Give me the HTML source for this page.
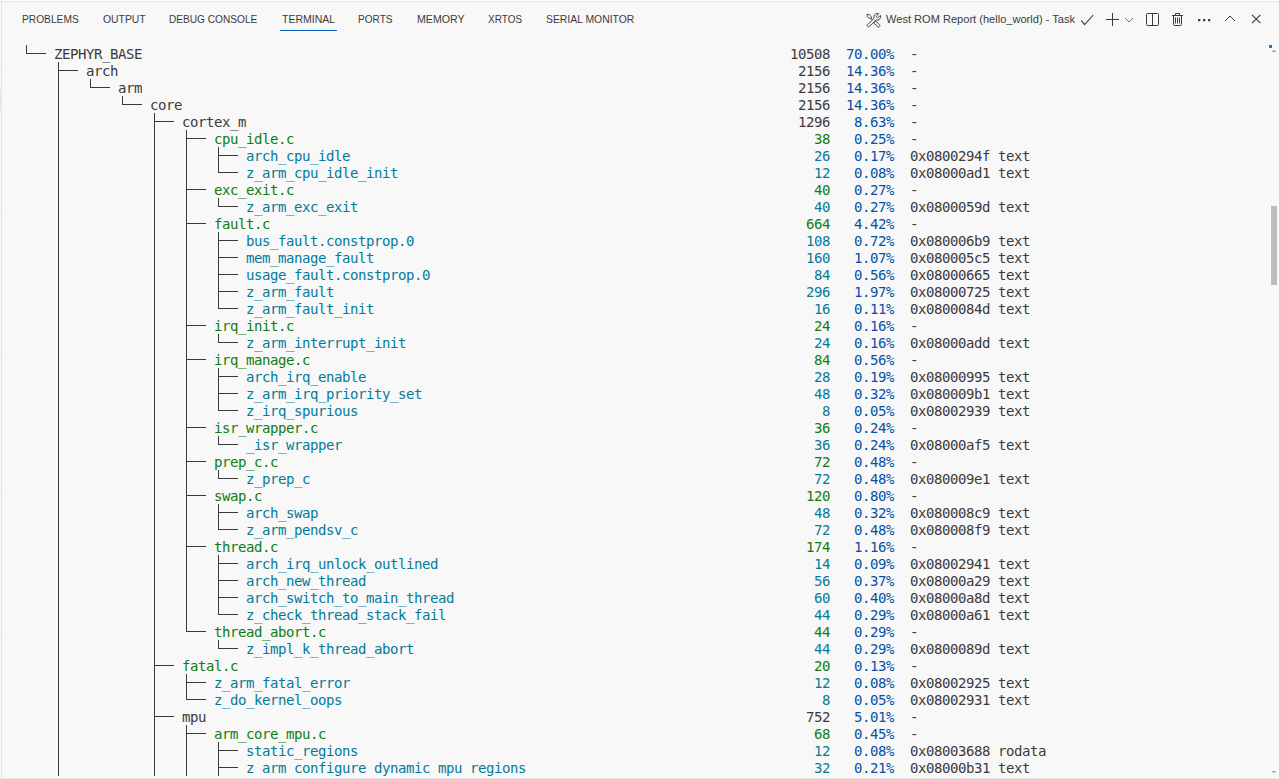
<!DOCTYPE html>
<html lang="en">
<head>
<meta charset="utf-8">
<title>West ROM Report (hello_world) - Task</title>
<style>
html,body{margin:0;padding:0;background:#f8f8f8;}
body{width:1279px;height:779px;overflow:hidden;background:#f8f8f8;position:relative;font-family:"Liberation Sans","DejaVu Sans",sans-serif;color:#3b3b3b;}
.edge-l{position:absolute;left:1px;top:0;width:1px;height:779px;background:#e5e5e5;}
.edge-t0{position:absolute;left:2px;top:0;width:1277px;height:1px;background:#ffffff;}
.edge-t{position:absolute;left:1px;top:1px;width:1278px;height:1px;background:#e5e5e5;}
.edge-b{position:absolute;left:0;top:778px;width:1279px;height:1px;background:#e5e5e5;}
.tab{transform-origin:0 0;position:absolute;top:11px;height:16px;line-height:16px;font-size:11px;white-space:nowrap;color:#3b3b3b;text-transform:uppercase;}
.tab.on{color:#3b3b3b;}
.tabline{position:absolute;left:280px;top:30px;width:57px;height:1px;background:#005fb8;}
.ttl{transform-origin:0 0;transform:scaleX(0.962);position:absolute;left:886px;top:10px;height:18px;line-height:18px;font-size:11.5px;white-space:nowrap;color:#3b3b3b;}
.ico{position:absolute;overflow:visible;}
.term{position:absolute;left:0;top:0;width:1279px;height:776px;overflow:hidden;font-family:"DejaVu Sans Mono","Liberation Mono",monospace;font-size:14px;letter-spacing:-0.4287px;color:#3b3b3b;}
.r{position:absolute;left:0;height:17px;line-height:17px;white-space:pre;}
.r span{position:absolute;top:1px;height:17px;line-height:17px;white-space:pre;}
.g{color:#107c10;}
.c{color:#047b9a;}
.b{color:#0451a5;}
.ln{position:absolute;background:#3b3b3b;}
.mk{position:absolute;left:0;width:1px;height:1px;background:#e5e5e5;}
.sel{position:absolute;left:0;top:89px;width:1px;height:22px;background:#e4e6f1;}
.ov1{position:absolute;left:1269px;top:45px;width:3px;height:3px;background:#0a7bd1;}
.ov2{position:absolute;left:1273px;top:50px;width:2px;height:1px;background:#b4b4b4;}
.ov3{position:absolute;left:1272px;top:51px;width:4px;height:1px;background:#a8a8a8;}
.ov4{position:absolute;left:1272px;top:771px;width:4px;height:1px;background:#a8a8a8;}
.ov5{position:absolute;left:1273px;top:772px;width:2px;height:1px;background:#b4b4b4;}
.sb{position:absolute;left:1271px;top:206px;width:6px;height:79px;background:#bdbdbd;}
</style>
</head>
<body>
<div class="edge-t0"></div>
<div class="edge-l"></div>
<div class="edge-t"></div>
<div class="edge-b"></div>

<div class="tab" style="left:21.50px;transform:scaleX(0.9280)">PROBLEMS</div>
<div class="tab" style="left:102.80px;transform:scaleX(0.9440)">OUTPUT</div>
<div class="tab" style="left:169.00px;transform:scaleX(0.9200)">DEBUG CONSOLE</div>
<div class="tab on" style="left:281.60px;transform:scaleX(0.9560)">TERMINAL</div>
<div class="tab" style="left:358.00px;transform:scaleX(0.9180)">PORTS</div>
<div class="tab" style="left:416.50px;transform:scaleX(0.9630)">MEMORY</div>
<div class="tab" style="left:488.00px;transform:scaleX(0.9100)">XRTOS</div>
<div class="tab" style="left:545.70px;transform:scaleX(0.9440)">SERIAL MONITOR</div>
<div class="tabline"></div>
<div class="ttl">West ROM Report (hello_world) - Task</div>
<svg class="ico" style="left:0;top:0" width="1279" height="40" viewBox="0 0 1279 40" fill="none" stroke="#3b3b3b" stroke-width="1">
<g transform="translate(867 14.2) rotate(-45)" stroke-linejoin="round" stroke-width="0.9">
<path d="M0,0 L1.45,2 L1.45,3.8 L0.5,5.6 L-0.5,5.6 L-1.45,3.8 L-1.45,2 Z"/>
<path d="M0,5.6 L0,10.8" stroke-width="1.1"/>
<rect x="-1.4" y="10.8" width="2.8" height="6.8" rx="1.2"/>
</g>
<g transform="translate(877.3 16.8) rotate(45)" stroke-linejoin="round" stroke-width="0.9">
<path fill="#f8f8f8" d="M-1.2,-3.18 L-1.2,-0.6 A1.2,1.2 0 0 0 1.2,-0.6 L1.2,-3.18 A3.4,3.4 0 0 1 1.3,3.14 L1.3,12.3 A1.3,1.3 0 0 1 -1.3,12.3 L-1.3,3.14 A3.4,3.4 0 0 1 -1.2,-3.18 Z"/>
</g>
<path d="M1081.2,20.3 L1084.6,24.6 L1093.2,15" stroke-width="1.1"/>
<path d="M1106,19.5 H1119 M1112.5,13 V26"/>
<path d="M1125,18 L1129,22 L1133,18" stroke-width="0.9" stroke="#616161"/>
<rect x="1146.5" y="13.5" width="12" height="12" rx="1"/>
<path d="M1152.5,13.5 V25.5"/>
<path d="M1172,15.5 H1183 M1175.5,15 V13.5 H1179.5 V15 M1173.5,15.5 V24.5 Q1173.5,25.5 1174.5,25.5 H1180.5 Q1181.5,25.5 1181.5,24.5 V15.5 M1175.5,17.5 V23.5 M1177.5,17.5 V23.5 M1179.5,17.5 V23.5"/>
<g fill="#3b3b3b" stroke="none"><rect x="1198" y="19" width="2.3" height="2.2" rx="0.5"/><rect x="1203" y="19" width="2.3" height="2.2" rx="0.5"/><rect x="1208" y="19" width="2.3" height="2.2" rx="0.5"/></g>
<path d="M1225,21 L1230,16 L1235,21"/>
<path d="M1252,14.9 L1260.4,23.1 M1260.4,14.9 L1252,23.1" stroke-width="1.15"/>
</svg>

<div class="term">
<div class="ln" style="left:26px;top:45px;width:1px;height:9px"></div>
<div class="ln" style="left:58px;top:62px;width:1px;height:714px"></div>
<div class="ln" style="left:90px;top:79px;width:1px;height:9px"></div>
<div class="ln" style="left:122px;top:96px;width:1px;height:9px"></div>
<div class="ln" style="left:154px;top:113px;width:1px;height:663px"></div>
<div class="ln" style="left:186px;top:130px;width:1px;height:502px"></div>
<div class="ln" style="left:186px;top:674px;width:1px;height:26px"></div>
<div class="ln" style="left:186px;top:725px;width:1px;height:51px"></div>
<div class="ln" style="left:218px;top:147px;width:1px;height:26px"></div>
<div class="ln" style="left:218px;top:198px;width:1px;height:9px"></div>
<div class="ln" style="left:218px;top:232px;width:1px;height:77px"></div>
<div class="ln" style="left:218px;top:334px;width:1px;height:9px"></div>
<div class="ln" style="left:218px;top:368px;width:1px;height:43px"></div>
<div class="ln" style="left:218px;top:436px;width:1px;height:9px"></div>
<div class="ln" style="left:218px;top:470px;width:1px;height:9px"></div>
<div class="ln" style="left:218px;top:504px;width:1px;height:26px"></div>
<div class="ln" style="left:218px;top:555px;width:1px;height:60px"></div>
<div class="ln" style="left:218px;top:640px;width:1px;height:9px"></div>
<div class="ln" style="left:218px;top:742px;width:1px;height:34px"></div>
<div class="ln" style="left:26px;top:53px;width:20px;height:1px"></div>
<div class="ln" style="left:58px;top:70px;width:20px;height:1px"></div>
<div class="ln" style="left:90px;top:87px;width:20px;height:1px"></div>
<div class="ln" style="left:122px;top:104px;width:20px;height:1px"></div>
<div class="ln" style="left:154px;top:121px;width:20px;height:1px"></div>
<div class="ln" style="left:186px;top:138px;width:20px;height:1px"></div>
<div class="ln" style="left:218px;top:155px;width:20px;height:1px"></div>
<div class="ln" style="left:218px;top:172px;width:20px;height:1px"></div>
<div class="ln" style="left:186px;top:189px;width:20px;height:1px"></div>
<div class="ln" style="left:218px;top:206px;width:20px;height:1px"></div>
<div class="ln" style="left:186px;top:223px;width:20px;height:1px"></div>
<div class="ln" style="left:218px;top:240px;width:20px;height:1px"></div>
<div class="ln" style="left:218px;top:257px;width:20px;height:1px"></div>
<div class="ln" style="left:218px;top:274px;width:20px;height:1px"></div>
<div class="ln" style="left:218px;top:291px;width:20px;height:1px"></div>
<div class="ln" style="left:218px;top:308px;width:20px;height:1px"></div>
<div class="ln" style="left:186px;top:325px;width:20px;height:1px"></div>
<div class="ln" style="left:218px;top:342px;width:20px;height:1px"></div>
<div class="ln" style="left:186px;top:359px;width:20px;height:1px"></div>
<div class="ln" style="left:218px;top:376px;width:20px;height:1px"></div>
<div class="ln" style="left:218px;top:393px;width:20px;height:1px"></div>
<div class="ln" style="left:218px;top:410px;width:20px;height:1px"></div>
<div class="ln" style="left:186px;top:427px;width:20px;height:1px"></div>
<div class="ln" style="left:218px;top:444px;width:20px;height:1px"></div>
<div class="ln" style="left:186px;top:461px;width:20px;height:1px"></div>
<div class="ln" style="left:218px;top:478px;width:20px;height:1px"></div>
<div class="ln" style="left:186px;top:495px;width:20px;height:1px"></div>
<div class="ln" style="left:218px;top:512px;width:20px;height:1px"></div>
<div class="ln" style="left:218px;top:529px;width:20px;height:1px"></div>
<div class="ln" style="left:186px;top:546px;width:20px;height:1px"></div>
<div class="ln" style="left:218px;top:563px;width:20px;height:1px"></div>
<div class="ln" style="left:218px;top:580px;width:20px;height:1px"></div>
<div class="ln" style="left:218px;top:597px;width:20px;height:1px"></div>
<div class="ln" style="left:218px;top:614px;width:20px;height:1px"></div>
<div class="ln" style="left:186px;top:631px;width:20px;height:1px"></div>
<div class="ln" style="left:218px;top:648px;width:20px;height:1px"></div>
<div class="ln" style="left:154px;top:665px;width:20px;height:1px"></div>
<div class="ln" style="left:186px;top:682px;width:20px;height:1px"></div>
<div class="ln" style="left:186px;top:699px;width:20px;height:1px"></div>
<div class="ln" style="left:154px;top:716px;width:20px;height:1px"></div>
<div class="ln" style="left:186px;top:733px;width:20px;height:1px"></div>
<div class="ln" style="left:218px;top:750px;width:20px;height:1px"></div>
<div class="ln" style="left:218px;top:767px;width:20px;height:1px"></div>
<div class="r" style="top:45px"><span style="left:54px">ZEPHYR_BASE</span><span style="left:790px">10508</span><span class="b" style="left:846px">70.00%</span><span style="left:910px">-</span></div>
<div class="r" style="top:62px"><span style="left:86px">arch</span><span style="left:798px">2156</span><span class="b" style="left:846px">14.36%</span><span style="left:910px">-</span></div>
<div class="r" style="top:79px"><span style="left:118px">arm</span><span style="left:798px">2156</span><span class="b" style="left:846px">14.36%</span><span style="left:910px">-</span></div>
<div class="r" style="top:96px"><span style="left:150px">core</span><span style="left:798px">2156</span><span class="b" style="left:846px">14.36%</span><span style="left:910px">-</span></div>
<div class="r" style="top:113px"><span style="left:182px">cortex_m</span><span style="left:798px">1296</span><span class="b" style="left:854px">8.63%</span><span style="left:910px">-</span></div>
<div class="r" style="top:130px"><span class="g" style="left:214px">cpu_idle.c</span><span class="g" style="left:814px">38</span><span class="b" style="left:854px">0.25%</span><span style="left:910px">-</span></div>
<div class="r" style="top:147px"><span class="c" style="left:246px">arch_cpu_idle</span><span class="c" style="left:814px">26</span><span class="b" style="left:854px">0.17%</span><span style="left:910px">0x0800294f text</span></div>
<div class="r" style="top:164px"><span class="c" style="left:246px">z_arm_cpu_idle_init</span><span class="c" style="left:814px">12</span><span class="b" style="left:854px">0.08%</span><span style="left:910px">0x08000ad1 text</span></div>
<div class="r" style="top:181px"><span class="g" style="left:214px">exc_exit.c</span><span class="g" style="left:814px">40</span><span class="b" style="left:854px">0.27%</span><span style="left:910px">-</span></div>
<div class="r" style="top:198px"><span class="c" style="left:246px">z_arm_exc_exit</span><span class="c" style="left:814px">40</span><span class="b" style="left:854px">0.27%</span><span style="left:910px">0x0800059d text</span></div>
<div class="r" style="top:215px"><span class="g" style="left:214px">fault.c</span><span class="g" style="left:806px">664</span><span class="b" style="left:854px">4.42%</span><span style="left:910px">-</span></div>
<div class="r" style="top:232px"><span class="c" style="left:246px">bus_fault.constprop.0</span><span class="c" style="left:806px">108</span><span class="b" style="left:854px">0.72%</span><span style="left:910px">0x080006b9 text</span></div>
<div class="r" style="top:249px"><span class="c" style="left:246px">mem_manage_fault</span><span class="c" style="left:806px">160</span><span class="b" style="left:854px">1.07%</span><span style="left:910px">0x080005c5 text</span></div>
<div class="r" style="top:266px"><span class="c" style="left:246px">usage_fault.constprop.0</span><span class="c" style="left:814px">84</span><span class="b" style="left:854px">0.56%</span><span style="left:910px">0x08000665 text</span></div>
<div class="r" style="top:283px"><span class="c" style="left:246px">z_arm_fault</span><span class="c" style="left:806px">296</span><span class="b" style="left:854px">1.97%</span><span style="left:910px">0x08000725 text</span></div>
<div class="r" style="top:300px"><span class="c" style="left:246px">z_arm_fault_init</span><span class="c" style="left:814px">16</span><span class="b" style="left:854px">0.11%</span><span style="left:910px">0x0800084d text</span></div>
<div class="r" style="top:317px"><span class="g" style="left:214px">irq_init.c</span><span class="g" style="left:814px">24</span><span class="b" style="left:854px">0.16%</span><span style="left:910px">-</span></div>
<div class="r" style="top:334px"><span class="c" style="left:246px">z_arm_interrupt_init</span><span class="c" style="left:814px">24</span><span class="b" style="left:854px">0.16%</span><span style="left:910px">0x08000add text</span></div>
<div class="r" style="top:351px"><span class="g" style="left:214px">irq_manage.c</span><span class="g" style="left:814px">84</span><span class="b" style="left:854px">0.56%</span><span style="left:910px">-</span></div>
<div class="r" style="top:368px"><span class="c" style="left:246px">arch_irq_enable</span><span class="c" style="left:814px">28</span><span class="b" style="left:854px">0.19%</span><span style="left:910px">0x08000995 text</span></div>
<div class="r" style="top:385px"><span class="c" style="left:246px">z_arm_irq_priority_set</span><span class="c" style="left:814px">48</span><span class="b" style="left:854px">0.32%</span><span style="left:910px">0x080009b1 text</span></div>
<div class="r" style="top:402px"><span class="c" style="left:246px">z_irq_spurious</span><span class="c" style="left:822px">8</span><span class="b" style="left:854px">0.05%</span><span style="left:910px">0x08002939 text</span></div>
<div class="r" style="top:419px"><span class="g" style="left:214px">isr_wrapper.c</span><span class="g" style="left:814px">36</span><span class="b" style="left:854px">0.24%</span><span style="left:910px">-</span></div>
<div class="r" style="top:436px"><span class="c" style="left:246px">_isr_wrapper</span><span class="c" style="left:814px">36</span><span class="b" style="left:854px">0.24%</span><span style="left:910px">0x08000af5 text</span></div>
<div class="r" style="top:453px"><span class="g" style="left:214px">prep_c.c</span><span class="g" style="left:814px">72</span><span class="b" style="left:854px">0.48%</span><span style="left:910px">-</span></div>
<div class="r" style="top:470px"><span class="c" style="left:246px">z_prep_c</span><span class="c" style="left:814px">72</span><span class="b" style="left:854px">0.48%</span><span style="left:910px">0x080009e1 text</span></div>
<div class="r" style="top:487px"><span class="g" style="left:214px">swap.c</span><span class="g" style="left:806px">120</span><span class="b" style="left:854px">0.80%</span><span style="left:910px">-</span></div>
<div class="r" style="top:504px"><span class="c" style="left:246px">arch_swap</span><span class="c" style="left:814px">48</span><span class="b" style="left:854px">0.32%</span><span style="left:910px">0x080008c9 text</span></div>
<div class="r" style="top:521px"><span class="c" style="left:246px">z_arm_pendsv_c</span><span class="c" style="left:814px">72</span><span class="b" style="left:854px">0.48%</span><span style="left:910px">0x080008f9 text</span></div>
<div class="r" style="top:538px"><span class="g" style="left:214px">thread.c</span><span class="g" style="left:806px">174</span><span class="b" style="left:854px">1.16%</span><span style="left:910px">-</span></div>
<div class="r" style="top:555px"><span class="c" style="left:246px">arch_irq_unlock_outlined</span><span class="c" style="left:814px">14</span><span class="b" style="left:854px">0.09%</span><span style="left:910px">0x08002941 text</span></div>
<div class="r" style="top:572px"><span class="c" style="left:246px">arch_new_thread</span><span class="c" style="left:814px">56</span><span class="b" style="left:854px">0.37%</span><span style="left:910px">0x08000a29 text</span></div>
<div class="r" style="top:589px"><span class="c" style="left:246px">arch_switch_to_main_thread</span><span class="c" style="left:814px">60</span><span class="b" style="left:854px">0.40%</span><span style="left:910px">0x08000a8d text</span></div>
<div class="r" style="top:606px"><span class="c" style="left:246px">z_check_thread_stack_fail</span><span class="c" style="left:814px">44</span><span class="b" style="left:854px">0.29%</span><span style="left:910px">0x08000a61 text</span></div>
<div class="r" style="top:623px"><span class="g" style="left:214px">thread_abort.c</span><span class="g" style="left:814px">44</span><span class="b" style="left:854px">0.29%</span><span style="left:910px">-</span></div>
<div class="r" style="top:640px"><span class="c" style="left:246px">z_impl_k_thread_abort</span><span class="c" style="left:814px">44</span><span class="b" style="left:854px">0.29%</span><span style="left:910px">0x0800089d text</span></div>
<div class="r" style="top:657px"><span class="g" style="left:182px">fatal.c</span><span class="g" style="left:814px">20</span><span class="b" style="left:854px">0.13%</span><span style="left:910px">-</span></div>
<div class="r" style="top:674px"><span class="c" style="left:214px">z_arm_fatal_error</span><span class="c" style="left:814px">12</span><span class="b" style="left:854px">0.08%</span><span style="left:910px">0x08002925 text</span></div>
<div class="r" style="top:691px"><span class="c" style="left:214px">z_do_kernel_oops</span><span class="c" style="left:822px">8</span><span class="b" style="left:854px">0.05%</span><span style="left:910px">0x08002931 text</span></div>
<div class="r" style="top:708px"><span style="left:182px">mpu</span><span style="left:806px">752</span><span class="b" style="left:854px">5.01%</span><span style="left:910px">-</span></div>
<div class="r" style="top:725px"><span class="g" style="left:214px">arm_core_mpu.c</span><span class="g" style="left:814px">68</span><span class="b" style="left:854px">0.45%</span><span style="left:910px">-</span></div>
<div class="r" style="top:742px"><span class="c" style="left:246px">static_regions</span><span class="c" style="left:814px">12</span><span class="b" style="left:854px">0.08%</span><span style="left:910px">0x08003688 rodata</span></div>
<div class="r" style="top:759px"><span class="c" style="left:246px">z_arm_configure_dynamic_mpu_regions</span><span class="c" style="left:814px">32</span><span class="b" style="left:854px">0.21%</span><span style="left:910px">0x08000b31 text</span></div>
</div>
<div class="sb"></div>
<div class="mk" style="top:67px"></div>
<div class="mk" style="top:210px"></div>
<div class="mk" style="top:352px"></div>
<div class="mk" style="top:494px"></div>
<div class="mk" style="top:636px"></div>
<div class="sel"></div><div class="ov1"></div><div class="ov2"></div><div class="ov3"></div><div class="ov4"></div><div class="ov5"></div>
</body>
</html>
